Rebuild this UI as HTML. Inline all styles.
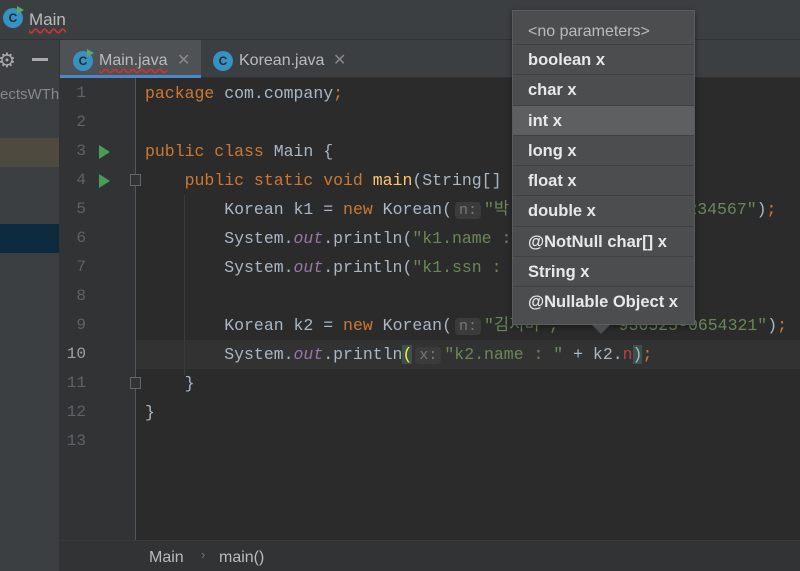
<!DOCTYPE html>
<html><head><meta charset="utf-8"><style>
*{margin:0;padding:0;box-sizing:border-box}
body{width:800px;height:571px;overflow:hidden;background:#2b2b2b;font-family:"Liberation Sans","Noto Sans CJK KR",sans-serif;position:relative}
.abs{position:absolute}
.title{left:0;top:0;width:800px;height:40px;background:#3c3f41;border-bottom:1px solid #323232}
.tabs{left:60px;top:40px;width:740px;height:38px;background:#3c3f41;border-bottom:1px solid #323232}
.left{left:0;top:40px;width:60px;height:531px;background:#3c3f41;border-right:1px solid #323232}
.gutter{left:60px;top:78px;width:76px;height:462px;background:#313335;border-right:1px solid #555}
.bottom{left:60px;top:540px;width:740px;height:31px;background:#313335;border-top:1px solid #3a3a3a;color:#bbb;font-size:16px}
.code{left:145px;font-family:"Liberation Mono","Noto Sans CJK KR",monospace;font-size:16.5px;color:#a9b7c6;white-space:pre;line-height:29px;height:29px}
.num{left:60px;width:26px;text-align:right;font-family:"Liberation Mono",monospace;font-size:16px;color:#606366;line-height:29px}
.k{color:#cc7832}.s{color:#6a8759}.i{color:#9876aa;font-style:italic}.f{color:#ffc66d}
.h{background:#3b3b3b;color:#787878;border-radius:4px;padding:0 4px;font-size:15px;margin:0 3px}
.ic{width:20px;height:20px;border-radius:50%;background:#3592c4;color:#2b2b2b;font-size:12px;font-weight:bold;text-align:center;line-height:20px}
.pop{left:512px;top:10px;width:183px;height:315px;background:#4b4d4f;border:1px solid #5a5c5e;box-shadow:0 2px 6px rgba(0,0,0,.4)}
.row{height:30.3px;border-top:1px solid #3e4042;color:#e8e8e8;font-weight:bold;font-size:16.5px;padding-left:15px;line-height:31px}
</style></head><body>
<div class="abs title"></div>
<div class="abs ic" style="left:3px;top:8px">C</div>
<div class="abs" style="left:17px;top:6px;width:0;height:0;border-left:7px solid #59a869;border-top:4px solid transparent;border-bottom:4px solid transparent"></div>
<div class="abs" style="left:29px;top:10px;color:#bbb;font-size:17px;text-decoration:underline wavy #c33;text-underline-offset:3px">Main</div>
<div class="abs tabs"></div>
<div class="abs" style="left:60px;top:40px;width:141px;height:38px;background:#4e5254"></div>
<div class="abs" style="left:60px;top:75px;width:141px;height:3px;background:#4a88c7"></div>
<div class="abs ic" style="left:73px;top:51px">C</div>
<div class="abs" style="left:87px;top:49px;width:0;height:0;border-left:7px solid #59a869;border-top:4px solid transparent;border-bottom:4px solid transparent"></div>
<div class="abs" style="left:99px;top:52px;color:#bbb;font-size:16px;text-decoration:underline wavy #c33;text-underline-offset:3px">Main.java</div>
<div class="abs" style="left:177px;top:50px;color:#888;font-size:16px">✕</div>
<div class="abs ic" style="left:213px;top:51px">C</div>
<div class="abs" style="left:239px;top:52px;color:#bbb;font-size:16px">Korean.java</div>
<div class="abs" style="left:333px;top:50px;color:#888;font-size:16px">✕</div>
<div class="abs left"></div>
<div class="abs" style="left:-2px;top:48px;color:#aaa;font-size:20px">⚙</div>
<div class="abs" style="left:32px;top:58px;width:16px;height:3px;background:#aaa"></div>
<div class="abs" style="left:0;top:86px;color:#888;font-size:15px;white-space:nowrap;width:59px;overflow:hidden">ectsWTh</div>
<div class="abs" style="left:0;top:138px;width:59px;height:29px;background:#4e4a40"></div>
<div class="abs" style="left:0;top:224px;width:59px;height:29px;background:#0d2a3f"></div>
<div class="abs gutter"></div>
<div class="abs" style="left:136px;top:340px;width:664px;height:29px;background:#323232"></div>
<div class="abs" style="left:99px;top:145px;width:0;height:0;border-left:11px solid #499c54;border-top:7px solid transparent;border-bottom:7px solid transparent"></div>
<div class="abs" style="left:99px;top:174px;width:0;height:0;border-left:11px solid #499c54;border-top:7px solid transparent;border-bottom:7px solid transparent"></div>
<div class="abs" style="left:130px;top:174px;width:11px;height:12px;border:1px solid #666;background:#313335"></div>
<div class="abs" style="left:130px;top:377px;width:11px;height:12px;border:1px solid #666;background:#313335"></div>
<div class="abs" style="left:184px;top:195px;width:1px;height:180px;background:#3b3b3b"></div>
<div class="abs num" style="top:79px">1</div><div class="abs num" style="top:108px">2</div><div class="abs num" style="top:137px">3</div><div class="abs num" style="top:166px">4</div><div class="abs num" style="top:195px">5</div><div class="abs num" style="top:224px">6</div><div class="abs num" style="top:253px">7</div><div class="abs num" style="top:282px">8</div><div class="abs num" style="top:311px">9</div><div class="abs num" style="top:340px;color:#a4a3a3">10</div><div class="abs num" style="top:369px">11</div><div class="abs num" style="top:398px">12</div><div class="abs num" style="top:427px">13</div>
<div class="abs code" style="top:79px"><span class="k">package</span> com.company<span class="k">;</span></div>
<div class="abs code" style="top:137px"><span class="k">public class</span> Main {</div>
<div class="abs code" style="top:166px">    <span class="k">public static void</span> <span class="f">main</span>(String[]</div>
<div class="abs code" style="top:195px">        Korean k1 = <span class="k">new</span> Korean(<span class="h">n:</span><span class="s">"박                 1234567"</span>)<span class="k">;</span></div>
<div class="abs code" style="top:224px">        System.<span class="i">out</span>.println(<span class="s">"k1.name :</span></div>
<div class="abs code" style="top:253px">        System.<span class="i">out</span>.println(<span class="s">"k1.ssn :</span></div>
<div class="abs code" style="top:311px">        Korean k2 = <span class="k">new</span> Korean(<span class="h">n:</span><span class="s">"김지미",     "930525-0654321"</span>)<span class="k">;</span></div>
<div class="abs code" style="top:340px">        System.<span class="i">out</span>.println<span style="color:#ffef28;background:#3b514d">(</span><span class="h">x:</span><span class="s">"k2.name : "</span> + k2.<span style="color:#bc3f3c">n</span><span style="background:#3b514d">)</span><span class="k">;</span></div>
<div class="abs code" style="top:369px">    }</div>
<div class="abs code" style="top:398px">}</div>
<div class="abs bottom"><span class="abs" style="left:89px;top:8px">Main</span><span class="abs" style="left:141px;top:6px;color:#777;font-size:13px">›</span><span class="abs" style="left:159px;top:8px">main()</span></div>
<div class="abs pop">
<div style="height:33px;color:#bbb;font-size:16px;padding-left:15px;line-height:42px;">&lt;no parameters&gt;</div>
<div class="row">boolean x</div>
<div class="row">char x</div>
<div class="row" style="background:#5d5f61">int x</div>
<div class="row">long x</div>
<div class="row">float x</div>
<div class="row">double x</div>
<div class="row">@NotNull char[] x</div>
<div class="row">String x</div>
<div class="row">@Nullable Object x</div>
</div>
<div class="abs" style="left:592px;top:325px;width:0;height:0;border-top:9px solid #4b4d4f;border-left:9px solid transparent;border-right:9px solid transparent"></div>
</body></html>
